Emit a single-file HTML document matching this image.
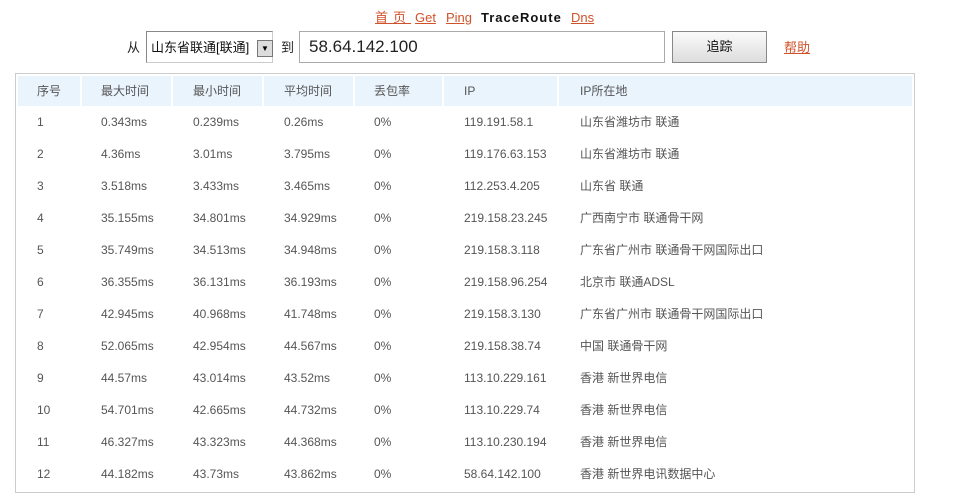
<!DOCTYPE html>
<html><head><meta charset="utf-8"><style>
body{margin:0;width:954px;height:502px;background:#fff;font-family:"Liberation Sans","Noto Sans CJK SC",sans-serif;position:relative;overflow:hidden}
.a{position:absolute;white-space:nowrap;line-height:16px}
.nav{top:10px;font-size:13px;color:#d0522a;text-decoration:underline}
.box{position:absolute;left:15px;top:73px;width:898px;height:418px;border:1px solid #ccc}
.hc{position:absolute;top:76px;height:30px;background:#eaf4fd;font-size:12px;color:#555;line-height:30px}
.c{position:absolute;font-size:12px;color:#555;line-height:16px}
</style></head><body>
<div class="a nav" style="left:375px;letter-spacing:5px">首页</div>
<div class="a nav" style="left:415px">Get</div>
<div class="a nav" style="left:446px">Ping</div>
<div class="a" style="left:481px;top:10px;font-size:13px;font-weight:bold;color:#111;letter-spacing:1px">TraceRoute</div>
<div class="a nav" style="left:571px">Dns</div>
<div class="a" style="left:127px;top:40px;font-size:13px;color:#222">从</div>
<div class="a" style="left:146px;top:31px;width:125px;height:30px;border:1px solid #888;border-right-color:#ccc;border-bottom-color:#ccc"></div>
<div class="a" style="left:151px;top:40px;font-size:13px;color:#111">山东省联通[联通]</div>
<div class="a" style="left:257px;top:40px;width:14px;height:15px;background:#ddd;border:1px solid #777;font-size:8px;text-align:center;line-height:15px">▼</div>
<div class="a" style="left:281px;top:40px;font-size:13px;color:#222">到</div>
<div class="a" style="left:299px;top:31px;width:364px;height:30px;border:1px solid #aaa"></div>
<div class="a" style="left:309px;top:38px;font-size:17px;color:#222;line-height:18px">58.64.142.100</div>
<div class="a" style="left:672px;top:31px;width:93px;height:30px;border:1px solid #888;background:linear-gradient(#fafafa,#ddd);font-size:13px;text-align:center;line-height:30px;color:#111">追踪</div>
<div class="a" style="left:784px;top:40px;font-size:13px;color:#d0522a;text-decoration:underline">帮助</div>
<div class="box"></div>
<div class="hc" style="left:18px;width:62px"><span style="padding-left:19px">序号</span></div>
<div class="hc" style="left:82px;width:89px"><span style="padding-left:19px">最大时间</span></div>
<div class="hc" style="left:173px;width:89px"><span style="padding-left:20px">最小时间</span></div>
<div class="hc" style="left:264px;width:89px"><span style="padding-left:20px">平均时间</span></div>
<div class="hc" style="left:355px;width:87px"><span style="padding-left:19px">丢包率</span></div>
<div class="hc" style="left:444px;width:113px"><span style="padding-left:20px">IP</span></div>
<div class="hc" style="left:559px;width:353px"><span style="padding-left:21px">IP所在地</span></div>
<div id="rows"></div>
<script>
var d=[["1","0.343ms","0.239ms","0.26ms","0%","119.191.58.1","山东省潍坊市 联通"],
["2","4.36ms","3.01ms","3.795ms","0%","119.176.63.153","山东省潍坊市 联通"],
["3","3.518ms","3.433ms","3.465ms","0%","112.253.4.205","山东省 联通"],
["4","35.155ms","34.801ms","34.929ms","0%","219.158.23.245","广西南宁市 联通骨干网"],
["5","35.749ms","34.513ms","34.948ms","0%","219.158.3.118","广东省广州市 联通骨干网国际出口"],
["6","36.355ms","36.131ms","36.193ms","0%","219.158.96.254","北京市 联通ADSL"],
["7","42.945ms","40.968ms","41.748ms","0%","219.158.3.130","广东省广州市 联通骨干网国际出口"],
["8","52.065ms","42.954ms","44.567ms","0%","219.158.38.74","中国 联通骨干网"],
["9","44.57ms","43.014ms","43.52ms","0%","113.10.229.161","香港 新世界电信"],
["10","54.701ms","42.665ms","44.732ms","0%","113.10.229.74","香港 新世界电信"],
["11","46.327ms","43.323ms","44.368ms","0%","113.10.230.194","香港 新世界电信"],
["12","44.182ms","43.73ms","43.862ms","0%","58.64.142.100","香港 新世界电讯数据中心"]];
var xs=[37,101,193,284,374,464,580],h="";
d.forEach(function(r,i){r.forEach(function(v,j){h+='<div class="c" style="left:'+xs[j]+'px;top:'+(114+32*i)+'px">'+v+'</div>';});});
document.getElementById("rows").innerHTML=h;
</script>
</body></html>
